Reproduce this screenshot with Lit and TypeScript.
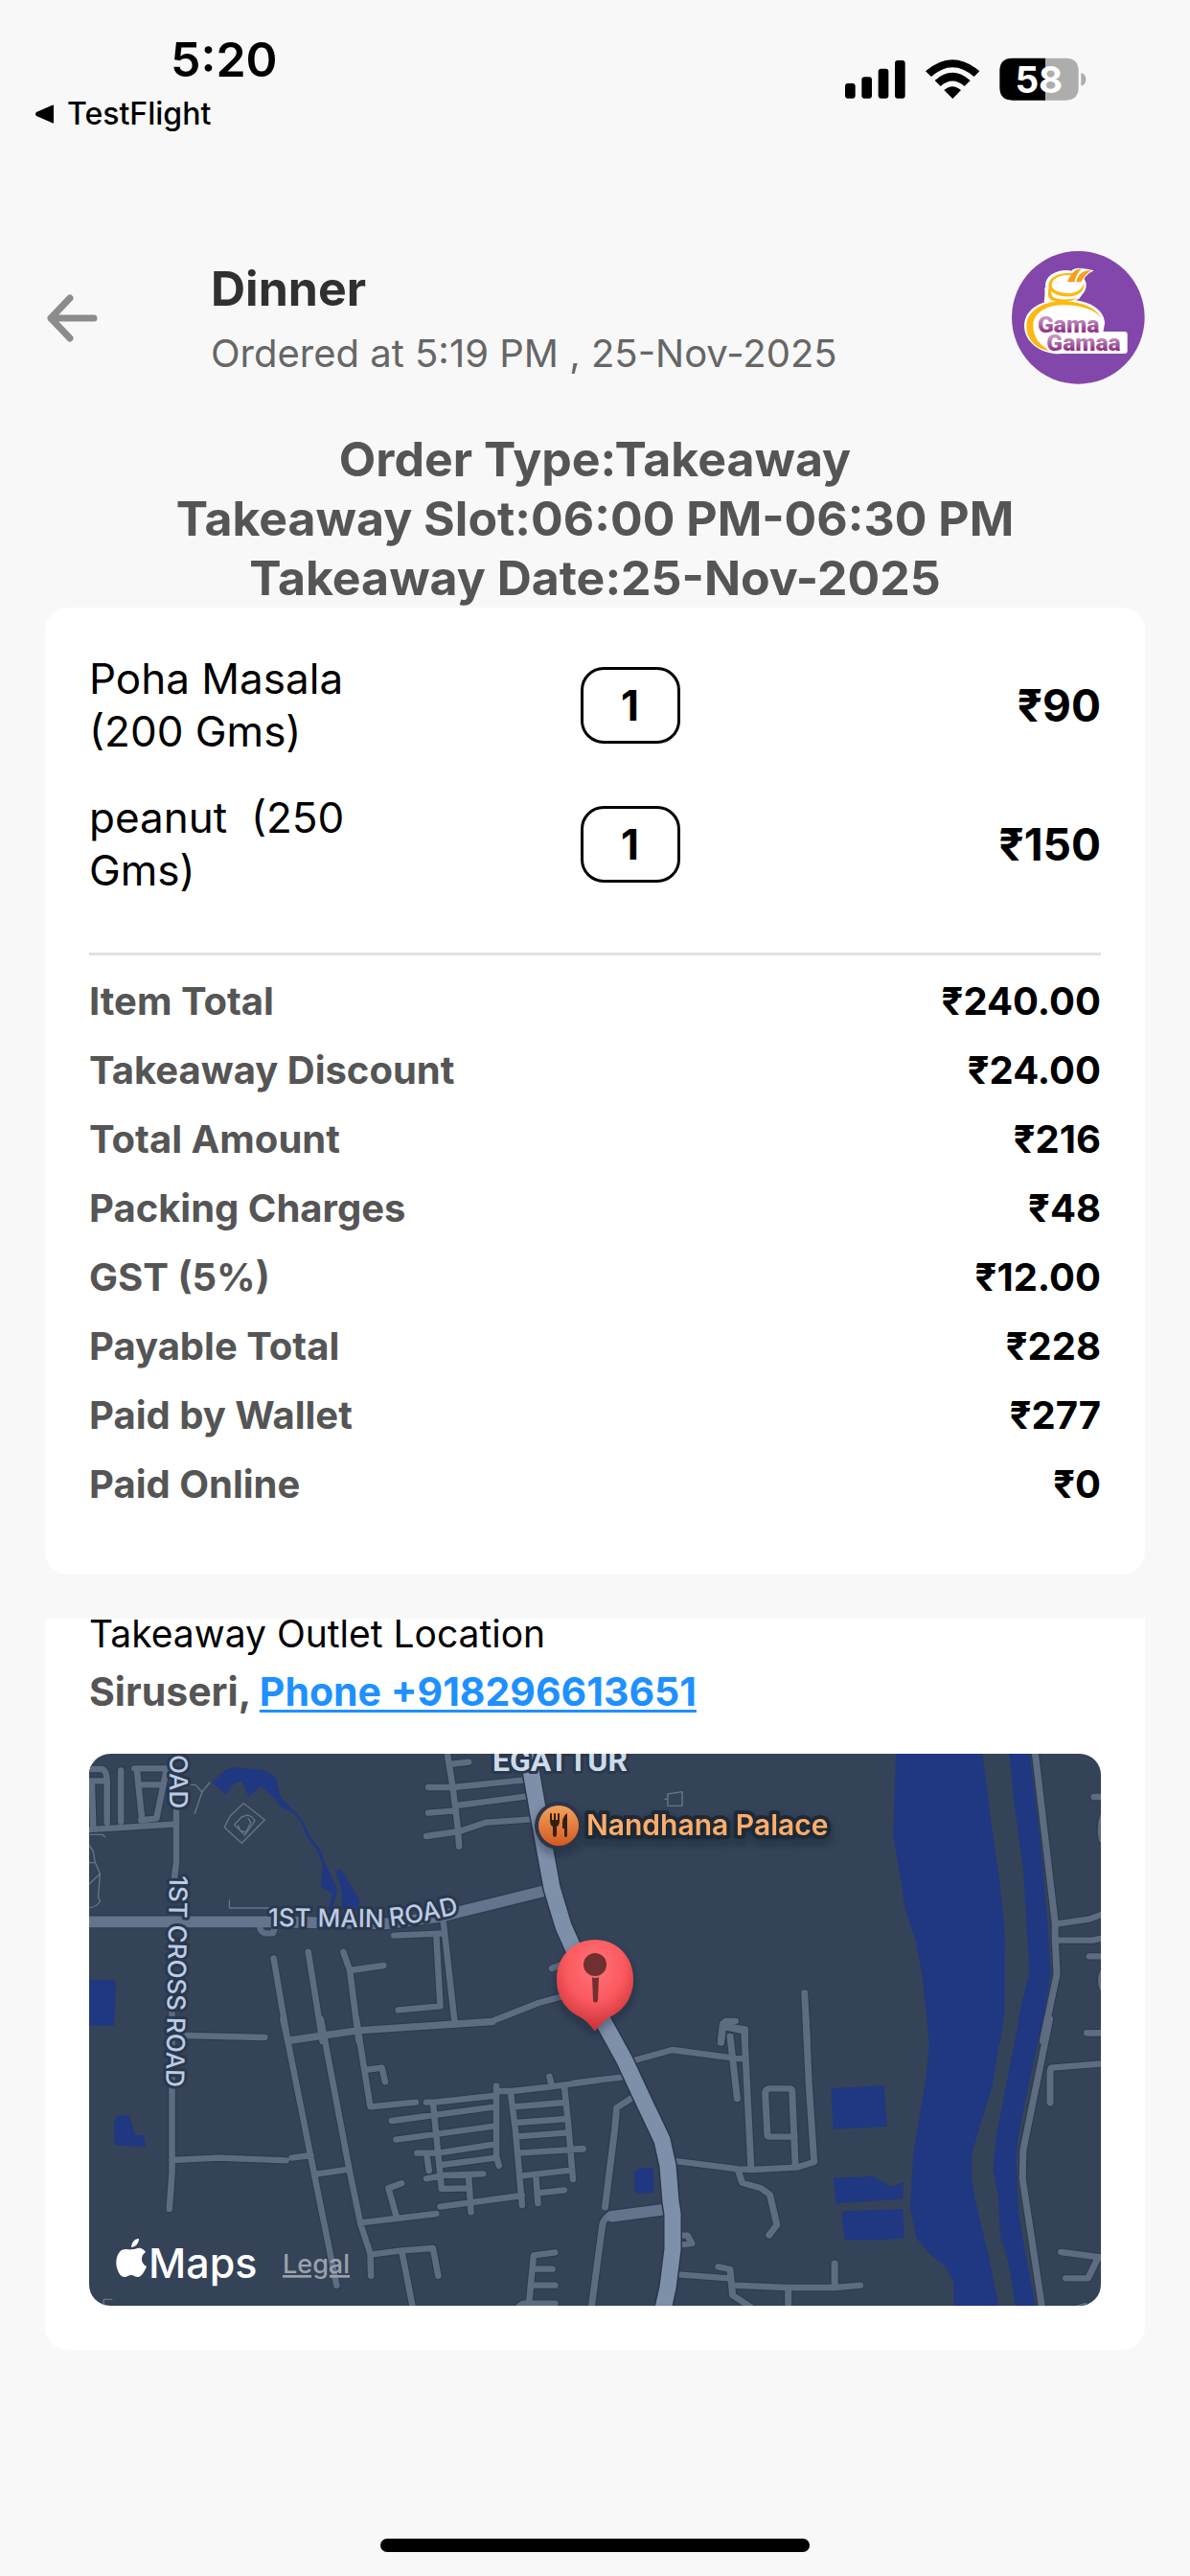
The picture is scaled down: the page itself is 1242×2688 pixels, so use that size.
import { LitElement, html, svg, css } from "lit";
import { customElement } from "lit/decorators.js";

/* ---------- Order data ---------- */

const order = {
  meal: "Dinner",
  placed: "Ordered at 5:19 PM , 25-Nov-2025",
  summary: [
    "Order Type:Takeaway",
    "Takeaway Slot:06:00 PM-06:30 PM",
    "Takeaway Date:25-Nov-2025",
  ],
  items: [
    { name: "Poha Masala (200 Gms)", qty: 1, price: "₹90" },
    { name: "peanut  (250 Gms)", qty: 1, price: "₹150" },
  ],
  totals: [
    ["Item Total", "₹240.00"],
    ["Takeaway Discount", "₹24.00"],
    ["Total Amount", "₹216"],
    ["Packing Charges", "₹48"],
    ["GST (5%)", "₹12.00"],
    ["Payable Total", "₹228"],
    ["Paid by Wallet", "₹277"],
    ["Paid Online", "₹0"],
  ],
};

/* ---------- Map tiles ---------- */

interface Tile {
  transform: string;
  water: string;
  roads: string;
  wide: string;
  thin: string;
}

const tiles: Tile[] = [
  {
    transform: "translate(-13 -20) scale(.34436 .33333)",
    water: `M412 148L450 112L475 103L565 110L603 133L618 195L655 235L685 270L708 320L735 355L755 405L790 485L775 550H762L775 497L740 478L745 405L728 360L698 320L680 272L655 245L622 228L590 190L558 162L522 195L500 147L478 152L450 188Z
      M785 428L800 420L858 518L850 550H805L803 485Z M36 768H112L119 780L114 911H36Z`,
    roads: `M30 108H76Q90 110 92 145V275 M30 145H92 M46 150L50 285 M134 112V272 M175 106H285 M182 106L198 265 M188 157H260 M272 110L242 262L195 268
      M30 298L302 280 M302 225V400L296 450 M555 605Q560 622 575 622H595L600 608
      M1122 50L1128 90L1140 165L1155 290L1159 350 M1128 93L1188 86 M1066 165H1140L1350 143 M1066 245L1150 238 M1150 222L1360 194
      M1060 318L1160 303L1240 275L1370 266
      M962 629L1115 622 M1090 630L1102 850L975 862 M1112 590L1145 895
      M597 700L640 960 M702 680L745 960 M808 680L828 738L855 960 M828 738L930 723
      M645 955L850 925L1140 905L1260 897L1400 840L1470 820
      M325 942L570 948 M1440 732L1470 720 M289 860V960`,
    wide: "M20 586H580L940 592L1100 570L1435 485",
    thin: `M448 290L465 255L506 215L570 267L500 340Z M478 282L500 258L518 252L532 258L540 270L510 315Z M490 285L495 300L513 306L528 275L520 262
      M336 157H360L380 180L403 150 M380 180L358 247 M463 518V543H600 M36 313H78L86 320
      M36 343L50 365L56 400L71 435L65 508L71 522Q60 540 36 543 M36 402L56 400 M36 470L71 435`,
  },
  {
    transform: "translate(507 -20) scale(.3699 .33333)",
    water: `M906 50H1149L1180 320L1198 450L1213 620V860L1200 965H1000L980 750L960 640L932 550L920 450L898 320Z
      M1225 50H1282L1312 320L1332 560L1343 745L1310 965H1245L1255 870L1283 740L1275 600L1265 420L1240 220Z`,
    roads: `M1298 50L1355 590V640L1360 750L1320 960 M1362 592L1450 578L1500 558 M1362 644H1460L1500 634 M1465 195H1500
      M1498 235Q1478 280 1488 330 M1452 694H1500 M1498 730Q1478 760 1490 795 M1445 934H1500
      M648 808L655 960 M453 897H425L417 905L412 960 M418 912L480 922V960`,
    wide: "",
    thin: "M262 186L303 179V223H262Z M254 202H262",
  },
  {
    transform: "translate(-13 280) scale(.34436 .33333)",
    water: "M113 315L122 294L158 292L178 355L203 353L210 390L125 386L115 380Z",
    roads: `M289 60V470L281 585 M290 432L430 425L635 433 M652 425L710 417
      M625 -10L640 60L718 465L788 825 M740 -10L825 455L860 630L890 725L892 795
      M848 -10L872 150L890 265L1028 251 M872 150L925 143L935 187 M640 60L850 28L1260 0
      M730 475L825 461 M985 505L945 520L968 605 M860 628L1090 600 M890 728L985 715L1080 708L1096 795 M985 715L1020 900
      M1102 578L1350 543 M1060 251H1085L1270 230 M1080 251L1106 522L1190 520 M955 309L1270 265 M968 368L1270 325
      M1032 410H1095L1270 382 M1105 447L1270 425 M1272 200V420L1280 450 M1060 410L1068 465
      M1060 490L1110 480L1232 475 M1188 480L1195 595
      M1272 216H1320L1440 202L1580 182 M1433 170L1440 200 M1315 218L1330 340L1350 573 M1478 200L1490 320L1504 492
      M1325 265L1478 252 M1330 315L1485 303 M1335 358L1488 346 M1340 410L1535 397 M1345 482L1500 463
      M1392 482L1398 567 M1398 535L1478 526
      M1450 721L1385 730L1370 890 M1385 773H1442 M1380 824H1450 M1340 890L1352 881H1450`,
    wide: "",
    thin: "M82 900V868H107",
  },
  {
    transform: "translate(507 280) scale(.3699 .33333)",
    water: `M997 -2H1205L1178 200L1120 410V500L1130 560L1165 720L1198 900H1070L1068 810L1045 765L1000 725L963 675L946 580L955 410L990 180L1000 70Z
      M1252 -2H1318L1285 170L1250 360L1245 430L1252 600L1275 750L1302 900H1244L1233 810L1218 730L1200 670L1195 550L1180 460L1190 350L1220 180Z
      M723 208L872 198L881 327L729 335Z M730 488L842 482L890 516L928 501L925 554L736 568Z
      M752 600L760 592L925 585L930 675L880 682H762Z M168 470L185 456H221L223 534L178 537L168 525Z`,
    roads: `M0 190L130 173 M150 125L275 87L430 110L475 115 M412 65L418 14L478 28L497 455 M438 45L458 240
      M652 -10L660 190L675 438L625 455L500 462L460 460L275 434 M460 462L472 503L525 520L550 540L570 635L548 667
      M622 450L613 215Q612 208 605 208H548Q537 210 537 225L543 352Q543 359 550 359H620
      M160 238L118 268L112 340L85 580 M104 604Q80 610 77 640L46 900 M290 668H318L330 693L290 698
      M290 790L435 802 M405 766L438 774L445 855L500 895 M445 824L600 831H735L805 824 M733 755V831 M602 831V900
      M1340 -10L1265 400L1263 490L1319 900 M1500 129L1345 143Q1341 145 1341 160V253 M1445 34H1500
      M1372 720L1500 739 M1475 740L1448 802H1385 M-6 398L22 396 M1410 898L1440 888`,
    wide: "M260 586L104 608",
    thin: "",
  },
];

const highway =
  "M455 -8L461 17L469 63L483 140L495 180L507 207L537 280L559 320L579 363L598 403L604 430L607 467L609 480L609 517L604 557L598 584";

@customElement("outlet-map")
export class OutletMap extends LitElement {
  static styles = css`
    :host {
      display: block;
    }
    .map {
      display: block;
      width: 100%;
      height: auto;
      border-radius: 22px;
      background: #344358;
      font-family: Inter, "Liberation Sans", sans-serif;
    }
    .water {
      fill: #203781;
    }
    .casing,
    .road,
    .thin,
    .highway,
    .highway-casing {
      fill: none;
      stroke-linejoin: round;
      stroke-linecap: round;
    }
    .casing {
      stroke: #2c3a4d;
      stroke-width: 25;
    }
    .casing.wide {
      stroke-width: 42;
    }
    .road {
      stroke: #5d6c81;
      stroke-width: 19;
    }
    .road.wide {
      stroke: #64748c;
      stroke-width: 35;
    }
    .thin {
      stroke: #667488;
      stroke-width: 4;
    }
    .highway-casing {
      stroke: #2a374a;
      stroke-width: 20;
    }
    .highway {
      stroke: #7e8fa9;
      stroke-width: 17;
    }
    .label {
      fill: #bccbe6;
      stroke: #2a384c;
      stroke-width: 6;
      stroke-linejoin: round;
      paint-order: stroke;
      font-size: 26px;
      font-weight: 500;
    }
    .town {
      fill: #cddbea;
      font-size: 32px;
      font-weight: 700;
      font-family: Roboto, sans-serif;
    }
    .place {
      fill: #ffad69;
      stroke: #1f2938;
      stroke-width: 8;
      font-size: 30px;
      font-weight: 600;
    }
    .brand {
      fill: #fff;
      font-size: 43px;
      font-weight: 500;
    }
    .legal {
      fill: #9aa1ab;
      font-size: 27px;
      font-weight: 500;
      text-decoration: underline;
    }
  `;

  render() {
    return html`
      <svg class="map" viewBox="0 0 1056 576" role="img" aria-label="Map of the outlet in Siruseri">
        <defs>
          <linearGradient id="food" x1="0" y1="0" x2="0" y2="1">
            <stop offset="0" stop-color="#f3a25c" />
            <stop offset="1" stop-color="#d35a22" />
          </linearGradient>
          <radialGradient id="pin" cx=".5" cy=".3" r=".68">
            <stop offset="0" stop-color="#ff7377" />
            <stop offset=".55" stop-color="#fb5a5f" />
            <stop offset="1" stop-color="#c93339" />
          </radialGradient>
          <filter id="shade" x="-30%" y="-30%" width="160%" height="170%">
            <feDropShadow dx="0" dy="5" stdDeviation="5" flood-color="#101722" flood-opacity=".4" />
          </filter>
          <path id="main-road" d="M187 180L300 181Q335 180 410 161" />
        </defs>
        ${tiles.map((t) => svg`<g transform=${t.transform}><path class="water" d=${t.water} /><path class="thin" d=${t.thin} /></g>`)}
        ${tiles.map((t) => svg`<g transform=${t.transform}><path class="casing" d=${t.roads} /><path class="casing wide" d=${t.wide} /></g>`)}
        ${tiles.map((t) => svg`<g transform=${t.transform}><path class="road" d=${t.roads} /><path class="road wide" d=${t.wide} /></g>`)}
        <path class="highway-casing" d=${highway} />
        <path class="highway" d=${highway} />

        <text class="label town" x="421" y="18">EGATTUR</text>
        <text class="label" transform="translate(84 1) rotate(90)">OAD</text>
        <text class="label" transform="translate(84 127) rotate(91)">1ST CROSS ROAD</text>
        <text class="label"><textPath href="#main-road">1ST MAIN ROAD</textPath></text>

        <g filter="url(#shade)">
          <text class="label place" x="519" y="85">Nandhana Palace</text>
          <circle cx="490" cy="75" r="25" fill="#2d3448" />
        </g>
        <circle cx="490" cy="75" r="21" fill="url(#food)" />
        <path d="M482 63V70M486 63V70M490 63V70" stroke="#35200f" stroke-width="2" stroke-linecap="round" fill="none" />
        <path d="M481 69H491Q491 75 488 76V85Q486 89 484 85V76Q481 75 481 69Z" fill="#35200f" />
        <path d="M499 62Q493 65 494 78H496V86Q498 88 499 86Z" fill="#35200f" />

        <g filter="url(#shade)">
          <path
            d="M528 194C551 194 568 212 568 235C568 254 558 268 543 275C534 280 532 286 528 289C524 286 522 280 513 275C498 268 488 254 488 235C488 212 505 194 528 194Z"
            fill="url(#pin)"
          />
        </g>
        <circle cx="528" cy="220" r="12" fill="#70302f" />
        <path d="M525 233Q528 235 532 233L531 258Q528 261 526 258Z" fill="#70302f" />

        <g fill="#fff">
          <path
            d="M45 517C49 517 52 514 56 517C58 518 59 520 59 520C53 524 54 532 60 535C57 542 54 546 51 546C48 546 46 544 44 544C41 544 40 546 37 546C33 546 30 541 29 536C27 528 30 517 38 517C41 517 43 518 45 517Z"
          />
          <path d="M44 515C44 511 47 506 52 506C52 511 48 515 44 515Z" />
        </g>
        <text class="brand" x="62" y="547">Maps</text>
        <a href="#legal"><text class="legal" x="202" y="542">Legal</text></a>
      </svg>
    `;
  }
}

@customElement("brand-logo")
export class BrandLogo extends LitElement {
  static styles = css`
    :host {
      display: block;
    }
    .logo {
      display: block;
      width: 139px;
      height: 139px;
    }
    .word {
      font-family: Roboto, sans-serif;
      font-weight: 900;
      font-size: 74px;
      fill: url(#ink);
      stroke: #fff;
      stroke-width: 14;
      stroke-linejoin: round;
      paint-order: stroke;
    }
  `;

  render() {
    return html`
      <svg class="logo" viewBox="51 36 417 417" role="img" aria-label="Gama Gamaa">
        <defs>
          <linearGradient id="ink" x1="0" y1="0" x2="0" y2="1">
            <stop offset=".3" stop-color="#c493c2" />
            <stop offset=".8" stop-color="#8b2a81" />
          </linearGradient>
        </defs>
        <circle cx="259" cy="244" r="208" fill="#8347ab" />
        <ellipse cx="220" cy="143" rx="64" ry="47" fill="#fff" />
        <path d="M154 150Q156 170 152 196L185 215L262 185L280 160L200 150Z" fill="#fff" />
        <path d="M90 270C90 215 150 187 215 187C285 187 340 215 342 262L330 330L200 358C140 358 90 320 90 270Z" fill="#fff" />
        <path d="M240 95Q255 82 308 97Q280 110 268 140L225 140Z" fill="#fff" />
        <path d="M320 288H404Q413 288 413 297V348Q413 357 404 357H200V320Z" fill="#fff" />
        <path
          d="M240 106C205 100 166 116 166 143C166 166 200 180 232 178C262 176 280 160 277 134C272 155 254 168 228 168C198 168 176 157 176 142C176 122 205 108 240 112Z"
          fill="#fdb913"
        />
        <path d="M168 146Q158 180 174 190Q210 204 258 184Q200 192 180 180Q172 172 176 150Z" fill="#fdb913" />
        <path
          d="M330 245C315 210 262 193 205 193C143 195 97 226 97 272C97 318 135 346 178 350C140 335 118 306 118 270C118 232 155 206 210 205C262 204 310 218 330 245Z"
          fill="#fdb913"
        />
        <path d="M225 133Q240 92 270 91Q252 108 248 133Z M252 133Q262 94 300 97Q280 108 268 133Z" fill="#f7a01d" />
        <text class="word" x="132" y="291">Gama</text>
        <text class="word" x="160" y="348">Gamaa</text>
      </svg>
    `;
  }
}

@customElement("app-root")
export class AppRoot extends LitElement {
  static styles = css`
    :host {
      display: block;
    }
    .screen {
      box-sizing: border-box;
      min-height: 100vh;
      display: flex;
      flex-direction: column;
      background: #f8f8f8;
      color: #000;
      font-family: Inter, "Liberation Sans", sans-serif;
      font-size: 40px;
      line-height: 60px;
    }

    .status {
      display: flex;
      justify-content: space-between;
      padding: 32px 108px 0 36px;
    }
    .clock {
      padding-left: 142px;
      font-size: 50px;
      font-weight: 600;
    }
    .return {
      display: flex;
      align-items: center;
      gap: 12px;
      margin-top: 8px;
      padding: 0;
      border: 0;
      background: none;
      color: #000;
      font: 500 32px/38px Inter, sans-serif;
    }
    .return svg {
      display: block;
    }
    .indicators {
      display: block;
      margin-top: 28px;
      width: 252px;
      height: 46px;
    }

    .header {
      display: flex;
      align-items: center;
      padding: 124px 47px 0;
    }
    .back {
      padding: 0;
      border: 0;
      background: none;
      width: 173px;
      height: 60px;
      text-align: left;
    }
    .back svg {
      display: block;
    }
    .heading {
      flex: 1;
      padding-top: 4px;
    }
    .meal {
      margin: 0;
      font-size: 50px;
      line-height: 64px;
      font-weight: 700;
      color: #303030;
    }
    .placed {
      margin: 6px 0 0;
      color: #666;
    }

    .summary {
      margin: 47px 0 0;
      text-align: center;
      font-size: 50px;
      line-height: 62px;
      font-weight: 700;
      color: #555;
    }
    .summary p {
      margin: 0;
    }

    .card {
      margin: 0 47px;
      background: #fff;
    }
    .bill {
      padding: 47px 46px 58px;
      border-radius: 24px;
    }
    .items {
      list-style: none;
      margin: 0;
      padding: 0 0 58px;
      display: flex;
      flex-direction: column;
      gap: 35px;
      border-bottom: 3px solid #e2e2e2;
    }
    .item {
      display: grid;
      grid-template-columns: 7fr 104px 6fr;
      align-items: center;
      font-size: 44px;
      line-height: 55px;
    }
    .name {
      max-width: 60%;
      white-space: pre-wrap;
    }
    .qty {
      box-sizing: border-box;
      height: 80px;
      border: 3px solid #000;
      border-radius: 24px;
      display: flex;
      align-items: center;
      justify-content: center;
      font-weight: 700;
    }
    .price {
      text-align: right;
      font-size: 46px;
      font-weight: 700;
    }
    .totals {
      margin: 12px 0 0;
    }
    .total {
      display: flex;
      justify-content: space-between;
      line-height: 72px;
      font-weight: 700;
    }
    .total dt {
      color: #555;
    }
    .total dd {
      margin: 0;
    }

    .outlet {
      margin-top: 46px;
      padding: 0 46px 46px;
      border-radius: 0 0 24px 24px;
    }
    .outlet-title {
      margin: 0;
      font-size: 39px;
      line-height: 32px;
      font-weight: 400;
    }
    .contact {
      margin: 14px 0 35px;
      font-size: 41px;
      font-weight: 700;
      color: #555;
    }
    .contact a {
      color: #1e90ff;
      text-decoration-thickness: 3px;
      text-underline-offset: 4px;
      text-decoration-skip-ink: none;
    }

    .home {
      margin: auto auto 25px;
      width: 36%;
      height: 14px;
      border-radius: 7px;
      background: #000;
    }
  `;

  render() {
    return html`
      <div class="screen">
        <div class="status">
          <div>
            <div class="clock">5:20</div>
            <button class="return">
              <svg width="22" height="20" viewBox="0 0 22 20"><path d="M20 1V19Q20 20 18 19L2 12Q0 10 2 8L18 1Q20 0 20 1Z" /></svg>
              TestFlight
            </button>
          </div>
          <svg class="indicators" viewBox="66 61 756 138" role="img" aria-label="Signal, Wi-Fi and battery at 58 percent">
            <rect x="66" y="142" width="32" height="47" rx="9" />
            <rect x="118" y="122" width="32" height="67" rx="9" />
            <rect x="170" y="96" width="32" height="93" rx="9" />
            <rect x="222" y="70" width="32" height="119" rx="9" />
            <path d="M318 104Q402 32 487 104L470 121Q402 62 336 121Z" />
            <path d="M347 133Q402 84 458 133L440 151Q402 118 365 151Z" />
            <path d="M376 163Q402 140 429 163L403 190Z" />
            <path d="M693 63H757Q797 63 797 103V155Q797 195 757 195H693Z" fill="#adadad" />
            <path d="M693 63H590Q550 63 550 103V155Q550 195 590 195H693Z" />
            <path d="M805 109Q820 113 820 129Q820 145 805 150Z" fill="#adadad" />
            <text x="673" y="171" text-anchor="middle" fill="#fff" font-family="Inter, sans-serif" font-weight="700" font-size="116">58</text>
          </svg>
        </div>

        <header class="header">
          <button class="back" aria-label="Back">
            <svg width="60" height="60" viewBox="0 0 60 60" fill="none" stroke="#8c8c8c" stroke-width="7" stroke-linecap="round" stroke-linejoin="round">
              <path d="M51 30H6M26 9L6 30L26 51" />
            </svg>
          </button>
          <div class="heading">
            <h1 class="meal">${order.meal}</h1>
            <p class="placed">${order.placed}</p>
          </div>
          <brand-logo></brand-logo>
        </header>

        <section class="summary">${order.summary.map((line) => html`<p>${line}</p>`)}</section>

        <section class="card bill">
          <ul class="items">
            ${order.items.map(
              (item) => html`<li class="item">
                <span class="name">${item.name}</span>
                <span class="qty">${item.qty}</span>
                <span class="price">${item.price}</span>
              </li>`
            )}
          </ul>
          <dl class="totals">
            ${order.totals.map(([label, amount]) => html`<div class="total"><dt>${label}</dt><dd>${amount}</dd></div>`)}
          </dl>
        </section>

        <section class="card outlet">
          <h2 class="outlet-title">Takeaway Outlet Location</h2>
          <p class="contact">Siruseri, <a href="tel:+918296613651">Phone +918296613651</a></p>
          <outlet-map></outlet-map>
        </section>

        <div class="home"></div>
      </div>
    `;
  }
}
